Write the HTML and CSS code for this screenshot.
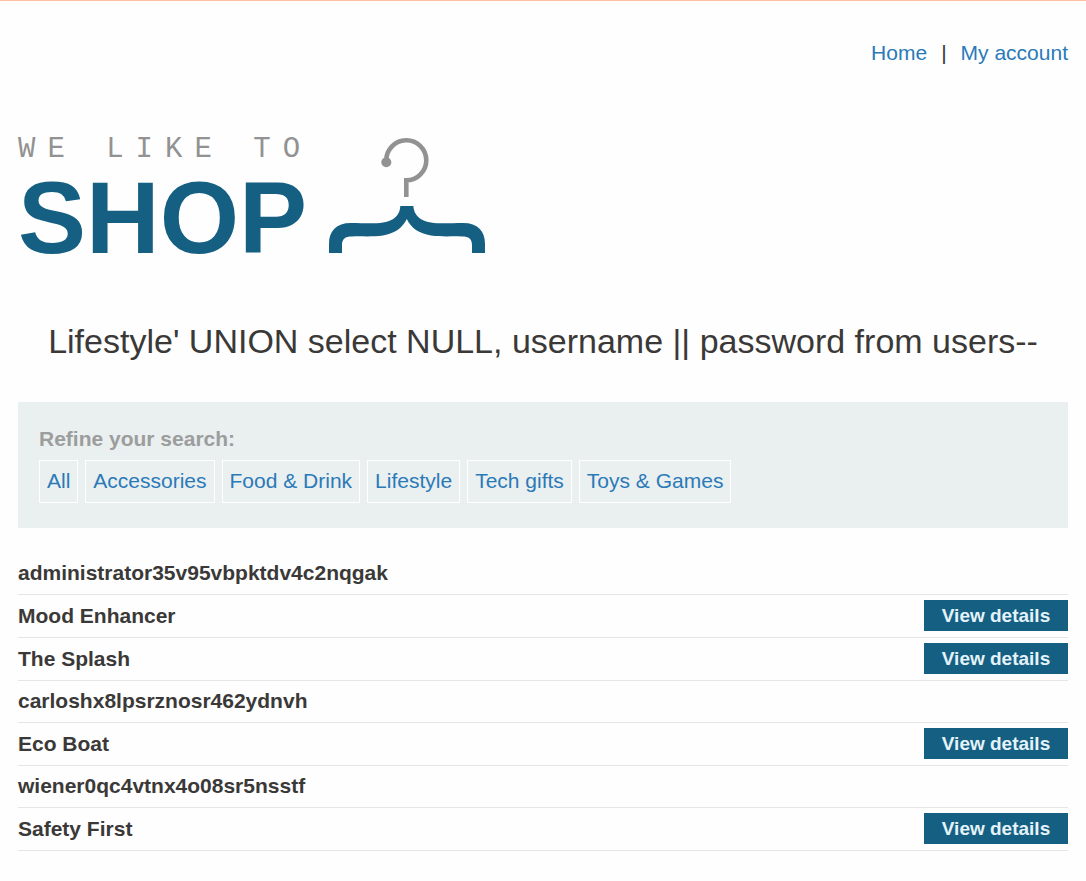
FILE: index.html
```html
<!DOCTYPE html>
<html lang="en">
<head>
<meta charset="utf-8">
<title>We like to shop</title>
<link rel="stylesheet" href="styles.css">
</head>
<body>
<div class="page">
  <header class="header">
    <nav class="nav">
      <a href="#">Home</a>
      <span>|</span>
      <a href="#">My account</a>
    </nav>
    <div class="brand">
      <div class="wordmark">
        <span class="tagline">WE LIKE TO</span>
        <span class="name">SHOP</span>
      </div>
      <svg class="hanger" viewBox="0 0 156 116" aria-hidden="true">
        <path d="M57.3 23A20 20 0 1 1 77.3 42.3V59" fill="none" stroke="#929292" stroke-width="4.6"/>
        <circle cx="57.3" cy="24.3" r="5" fill="#929292"/>
        <path d="M71.3 68H84.3C85 77 91 83 102 84.5C111 86 122 85 134 85C149 85 156 93 156 106V115H143V107C143 101 140 98.5 133 98.5C124 98 112 99 102 97.500C90 95.500 82 90 77.800 81C73.500 90 65.500 95.500 54 97.500C44 99 32 98 23 98.500C16 98.500 13 101 13 107V115H0V106C0 93 7 85 22 85C34 85 45 86 54 84.500C65 83 71 77 71.300 68Z" fill="#156082"/>
      </svg>
    </div>
  </header>
  <main>
    <h1 class="title">Lifestyle' UNION select NULL, username || password from users--</h1>
    <section class="filters">
      <h2 class="filters-label">Refine your search:</h2>
      <div class="filter-list">
        <a href="#">All</a>
        <a href="#">Accessories</a>
        <a href="#">Food &amp; Drink</a>
        <a href="#">Lifestyle</a>
        <a href="#">Tech gifts</a>
        <a href="#">Toys &amp; Games</a>
      </div>
    </section>
    <table class="products">
      <tbody>
        <tr><th scope="row">administrator35v95vbpktdv4c2nqgak</th><td></td></tr>
        <tr><th scope="row">Mood Enhancer</th><td><a class="button" href="#">View details</a></td></tr>
        <tr><th scope="row">The Splash</th><td><a class="button" href="#">View details</a></td></tr>
        <tr><th scope="row">carloshx8lpsrznosr462ydnvh</th><td></td></tr>
        <tr><th scope="row">Eco Boat</th><td><a class="button" href="#">View details</a></td></tr>
        <tr><th scope="row">wiener0qc4vtnx4o08sr5nsstf</th><td></td></tr>
        <tr><th scope="row">Safety First</th><td><a class="button" href="#">View details</a></td></tr>
      </tbody>
    </table>
  </main>
</div>
</body>
</html>
```
FILE: styles.css
```css
* { box-sizing: border-box; }

body {
  margin: 0;
  border-top: 1px solid #ffc0a5;
  background: #fefefe;
  color: #3a3938;
  font: 21px/30px "Liberation Sans", Arial, sans-serif;
}

a { color: #2a7ab8; text-decoration: none; }

.page { padding: 37px 18px 28px; }

.nav { display: flex; justify-content: flex-end; gap: 14px; }

.brand { display: flex; align-items: flex-start; gap: 22px; margin-top: 70px; }

.wordmark { display: flex; flex-direction: column; width: 289px; }

.tagline {
  color: #929292;
  font: 29px/24px "Liberation Mono", "Courier New", monospace;
  letter-spacing: 12px;
  white-space: nowrap;
}

.name {
  color: #156082;
  font-size: 102px;
  font-weight: bold;
  line-height: 112px;
}

.hanger { width: 156px; height: 116px; }

.title {
  margin: 45px 0 39px;
  font-size: 34px;
  font-weight: normal;
  line-height: 44px;
  text-align: center;
}

.filters { padding: 22px 21px 25px; background: #eaeff0; }

.filters-label {
  margin: 0 0 6px;
  color: #9c9d9d;
  font-size: 21px;
  line-height: 30px;
}

.filter-list { display: flex; flex-wrap: wrap; gap: 7px; }

.filter-list a {
  padding: 5px 7px 6px;
  border: 1px solid #fff;
}

.products { width: 100%; margin-top: 25px; border-collapse: collapse; }

.products th,
.products td {
  padding: 5px 0 6px;
  border-bottom: 1px solid #e6e6e6;
}

.products th { text-align: left; }
.products td { text-align: right; }

.button {
  display: block;
  width: 144px;
  margin-left: auto;
  background: #156082;
  color: #e4f3fa;
  font-size: 19px;
  font-weight: bold;
  line-height: 31px;
  text-align: center;
}
```
